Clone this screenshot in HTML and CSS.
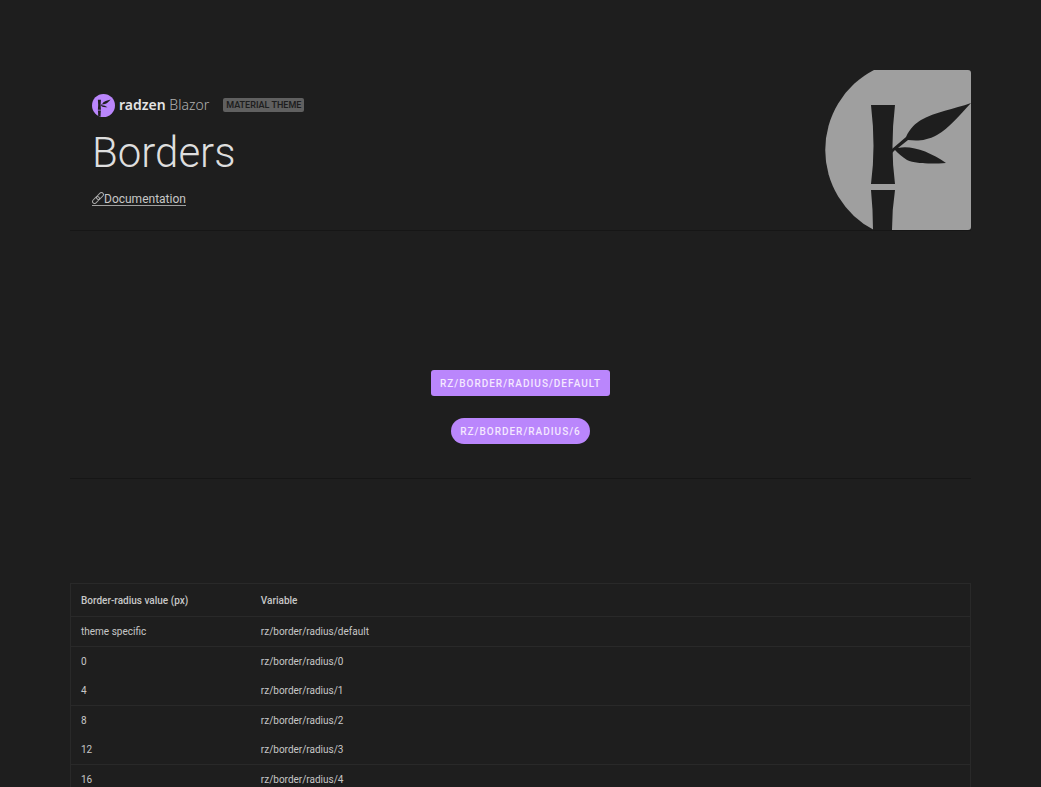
FILE: index.html
```html
<!DOCTYPE html>
<html lang="en">
<head>
<meta charset="utf-8">
<title>Borders</title>
<link rel="stylesheet" href="styles.css">
</head>
<body>

<main class="page">
  <header class="hero">
    <div class="intro">
      <div class="brand">
        <svg class="brand-icon" viewBox="0 -10 180 180" aria-hidden="true">
          <circle cx="90" cy="80" r="90" fill="#ba86fc"/>
          <g fill="#1e1e1e">
            <path d="M46 35H70Q65 77 70 114H46Q51 77 46 35Z"/>
            <path d="M46 120H70Q67 140 67 167Q58 165 48 160Q49 140 46 120Z"/>
            <path d="M67 79L81 67C85 58 91 53 96 50C110 42 129 39 146 33C134 46 124 58 112 65C101 71 92 71 83 70L73 78C87 75 105 82 121 93C107 94 91 94 82 90C77 87 73 83 70 80L67 83Z"/>
          </g>
        </svg>
        <span class="brand-name"><b>radzen</b> Blazor</span>
        <span class="badge">MATERIAL THEME</span>
      </div>
      <h1>Borders</h1>
      <a href="#" class="doc-link">
        <svg class="link-icon" viewBox="0 0 12 12" aria-hidden="true">
          <rect x="-4" y="-2" width="8" height="4" rx="2" transform="translate(4 8) rotate(-45)"/>
          <rect x="-4" y="-2" width="8" height="4" rx="2" transform="translate(8 4) rotate(-45)"/>
        </svg>Documentation
      </a>
    </div>
    <svg class="hero-logo" viewBox="0 0 146 160" aria-hidden="true">
      <path d="M49 0H143Q146 0 146 3V157Q146 160 143 160H49A90 90 0 0 1 49 0Z" fill="#9f9f9f"/>
      <g fill="#1e1e1e">
        <path d="M46 35H70Q65 77 70 114H46Q51 77 46 35Z"/>
        <path d="M46 120H70Q67 140 67 160H48Q48 140 46 120Z"/>
        <path d="M67 79L81 67C85 58 91 53 96 50C110 42 129 39 146 33C134 46 124 58 112 65C101 71 92 71 83 70L73 78C87 75 105 82 121 93C107 94 91 94 82 90C77 87 73 83 70 80L67 83Z"/>
      </g>
    </svg>
  </header>

  <section class="samples">
    <button type="button" class="sample">RZ/BORDER/RADIUS/DEFAULT</button>
    <button type="button" class="sample sample-round">RZ/BORDER/RADIUS/6</button>
  </section>

  <table class="values">
    <thead>
      <tr><th>Border-radius value (px)</th><th>Variable</th></tr>
    </thead>
    <tbody>
      <tr><td>theme specific</td><td>rz/border/radius/default</td></tr>
      <tr><td>0</td><td>rz/border/radius/0</td></tr>
      <tr><td>4</td><td>rz/border/radius/1</td></tr>
      <tr><td>8</td><td>rz/border/radius/2</td></tr>
      <tr><td>12</td><td>rz/border/radius/3</td></tr>
      <tr><td>16</td><td>rz/border/radius/4</td></tr>
    </tbody>
  </table>
</main>

</body>
</html>
```
FILE: styles.css
```css
* {
  box-sizing: border-box;
}

html {
  overflow: hidden;
}

body {
  margin: 0;
  background-color: #1e1e1e;
  color: #c7c7c7;
  font-family: Roboto, sans-serif;
  font-size: 10px;
}

.page {
  padding: 70px 70px 0;
}

.hero {
  display: flex;
  justify-content: space-between;
  border-bottom: 1px solid #161616;
}

.intro {
  padding: 23px 22px 0;
}

.brand {
  display: flex;
  align-items: center;
  height: 24px;
}

.brand-icon {
  width: 23px;
  height: 23px;
  margin-right: 4px;
}

.brand-name {
  font-family: "Noto Sans", sans-serif;
  font-size: 14px;
  line-height: 20px;
  padding-bottom: 1px;
  font-weight: 300;
  color: #b0b0b0;
}

.brand-name b {
  font-weight: 600;
  color: #e4e4e4;
}

.badge {
  margin-left: 14px;
  padding: 0 3px;
  border-radius: 2px;
  background-color: #606060;
  color: #1e1e1e;
  font-size: 9px;
  font-weight: 600;
  line-height: 14px;
}

h1 {
  margin: 10px 0 0;
  color: #dedede;
  font-size: 42px;
  font-weight: 300;
  line-height: 52px;
}

.doc-link {
  display: inline-block;
  margin-top: 13px;
  color: #c7c7c7;
  font-size: 12px;
  line-height: 14px;
  text-decoration: none;
  box-shadow: inset 0 -1px #a0a0a0;
}

.link-icon {
  width: 12px;
  height: 12px;
  vertical-align: -1px;
  fill: none;
  stroke: #a8a8a8;
}

.hero-logo {
  width: 146px;
  height: 160px;
}

.samples {
  display: flex;
  flex-direction: column;
  align-items: center;
  gap: 22px;
  padding: 139px 0 34px;
  border-bottom: 1px solid #161616;
}

.sample {
  height: 26px;
  padding: 0 9px;
  border: none;
  border-radius: 3px;
  background-color: #ba86fc;
  color: #f4e8ff;
  font-family: inherit;
  font-size: 10px;
  font-weight: 500;
  letter-spacing: 1px;
}

.sample-round {
  border-radius: 13px;
}

.values {
  width: 100%;
  margin-top: 104px;
  border: 1px solid #292929;
  border-collapse: separate;
  border-spacing: 0;
}

.values th,
.values td {
  height: 29px;
  padding: 0 10px;
  text-align: left;
}

.values th {
  height: 33px;
  border-bottom: 1px solid #292929;
  font-weight: 500;
}

.values th:first-child {
  width: 20%;
}

.values tr:nth-child(odd) td {
  height: 30px;
  border-bottom: 1px solid #292929;
}
```
